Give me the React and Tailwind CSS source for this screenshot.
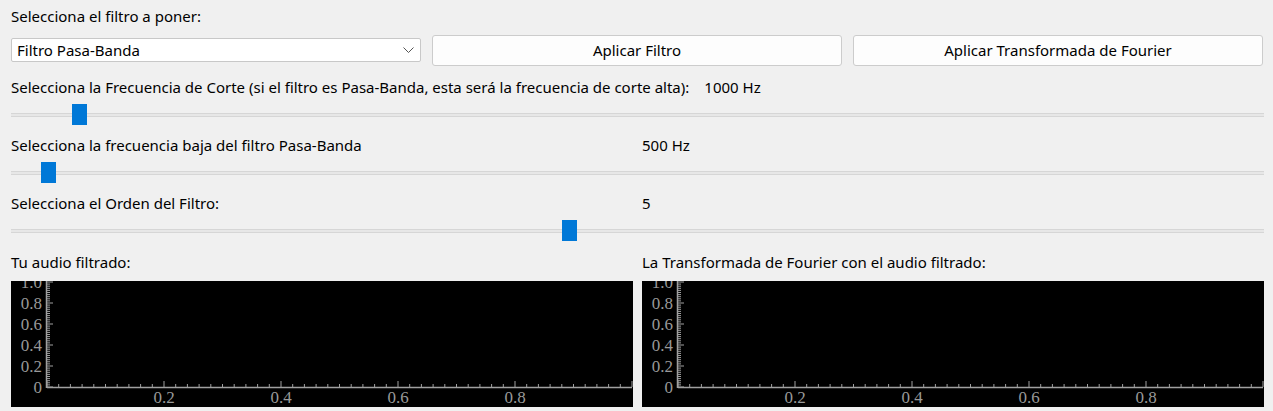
import React from 'react';

const uiFont = { fontFamily: '"Noto Sans", "Liberation Sans", sans-serif' };

const Slider = ({ fraction }) => {
  // handle is 15px wide, left edge placed along the free track length
  const left = `calc(${fraction} * (100% - 15px))`;
  return (
    <div className="relative h-[21px] flex items-center">
      <div className="w-full h-[4px] bg-[#e7e7e7] border-y border-[#d6d6d6]" />
      <div className="absolute top-0 w-[15px] h-[21px] bg-[#0078d7]" style={{ left }} />
    </div>
  );
};

const Plot = () => {
  const x0 = 36;
  const y0 = 106;
  const xw = 585;
  const yh = 105;
  const ticks = Array.from({ length: 51 }, (_, i) => i);
  const tickFont = { fontFamily: '"Liberation Serif", serif', fontSize: '17px' };
  return (
    <div className="h-[126px] bg-black overflow-hidden">
      <svg width="622" height="126" className="block">
        {ticks.map(i => {
          const x = x0 + (i / 50) * xw;
          const major = i % 10 === 0;
          return <line key={'x' + i} x1={x} x2={x} y1={y0} y2={y0 - (major ? 6 : 3)} stroke="#a0a0a0" strokeWidth="1" />;
        })}
        {ticks.map(i => {
          const y = y0 - (i / 50) * yh;
          const major = i % 10 === 0;
          return <line key={'y' + i} x1={x0} x2={x0 + (major ? 6 : 3)} y1={y} y2={y} stroke="#a0a0a0" strokeWidth="1" />;
        })}
        <line x1={x0} x2={x0 + xw} y1={y0 + 0.5} y2={y0 + 0.5} stroke="#a0a0a0" strokeWidth="1.5" />
        <line x1={x0 - 0.5} x2={x0 - 0.5} y1={0} y2={y0 + 1} stroke="#a0a0a0" strokeWidth="1.5" />
        {[0, 0.2, 0.4, 0.6, 0.8, 1.0].map(v => (
          <text key={'yl' + v} x={31} y={y0 - v * yh + 6} textAnchor="end" fill="#999999" style={tickFont}>
            {v === 0 ? '0' : v.toFixed(1)}
          </text>
        ))}
        {[0.2, 0.4, 0.6, 0.8].map(v => (
          <text key={'xl' + v} x={x0 + v * xw} y={122} textAnchor="middle" fill="#999999" style={tickFont}>
            {v.toFixed(1)}
          </text>
        ))}
      </svg>
    </div>
  );
};

export default function App() {
  return (
    <div className="w-[1273px] h-[411px] bg-[#f0f0f0] text-black text-[15px] pl-[11px] pr-[9px] overflow-hidden" style={uiFont}>
      <div className="h-[32px] flex items-center">Selecciona el filtro a poner:</div>

      <div className="grid grid-cols-3 gap-[11px] h-[32px] items-center mt-[2px] pr-[1px]">
        <div className="h-[24px] bg-white border border-[#c8c8c8] rounded-[2px] flex items-center justify-between pl-[5px] pr-[6px]">
          <span>Filtro Pasa-Banda</span>
          <svg width="11" height="7" viewBox="0 0 11 7">
            <polyline points="0.5,0.5 5.5,5.5 10.5,0.5" fill="none" stroke="#555" strokeWidth="1" />
          </svg>
        </div>
        <button className="h-[31px] bg-[#fdfdfd] border border-[#cccccc] rounded-[3px]">Aplicar Filtro</button>
        <button className="h-[31px] bg-[#fdfdfd] border border-[#cccccc] rounded-[3px]">Aplicar Transformada de Fourier</button>
      </div>

      <div className="h-[22px] mt-[10px] flex items-center gap-[15px]">
        <span>Selecciona la Frecuencia de Corte (si el filtro es Pasa-Banda, esta será la frecuencia de corte alta):</span>
        <span>1000 Hz</span>
      </div>
      <div className="mt-[6px]">
        <Slider fraction={0.0493} />
      </div>

      <div className="h-[22px] mt-[9px] grid grid-cols-2 gap-[9px] items-center">
        <span>Selecciona la frecuencia baja del filtro Pasa-Banda</span>
        <span>500 Hz</span>
      </div>
      <div className="mt-[6px]">
        <Slider fraction={0.0243} />
      </div>

      <div className="h-[22px] mt-[9px] grid grid-cols-2 gap-[9px] items-center">
        <span>Selecciona el Orden del Filtro:</span>
        <span>5</span>
      </div>
      <div className="mt-[6px]">
        <Slider fraction={0.445} />
      </div>

      <div className="h-[22px] mt-[10px] grid grid-cols-2 gap-[9px] items-center">
        <span>Tu audio filtrado:</span>
        <span>La Transformada de Fourier con el audio filtrado:</span>
      </div>
      <div className="grid grid-cols-2 gap-[9px] mt-[8px]">
        <Plot />
        <Plot />
      </div>
    </div>
  );
}
